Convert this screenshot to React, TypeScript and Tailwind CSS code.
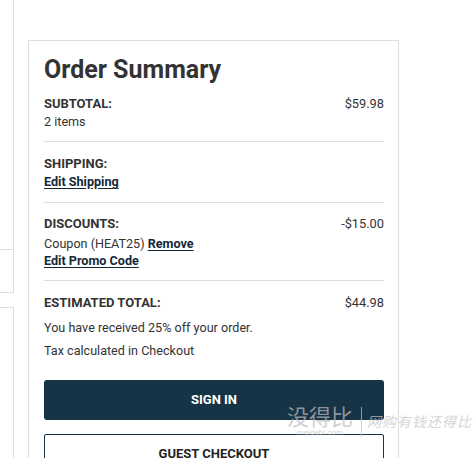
import React from 'react';

function Row({ label, value }: { label: string; value?: string }) {
    return (
        <div className="flex justify-between leading-[18px]">
            <span className="text-[13px] font-bold uppercase text-[#333]">{label}</span>
            {value && <span className="text-[12.8px] text-[#333]">{value}</span>}
        </div>
    );
}

export default function App() {
    return (
        <div
            className="relative h-[458px] w-[474px] overflow-hidden bg-white text-[12.6px] text-[#333]"
            style={{ fontFamily: 'Roboto, "Liberation Sans", sans-serif' }}
        >
            <div className="flex items-start gap-[14px]">
                {/* left column, mostly cut off */}
                <div className="w-[14px] shrink-0">
                    <div className="h-[293px] border-b border-r border-[#ddd]">
                        <div className="h-[250px] border-b border-[#ddd]"></div>
                    </div>
                    <div className="mt-[14px] h-[200px] border-r border-t border-[#ddd]"></div>
                </div>

                {/* order summary card */}
                <div className="mt-[40px] h-[460px] w-[371px] shrink-0 border border-[#ddd] pl-[15px] pr-[14px] pt-[13px]">
                    <h2 className="text-[25px] font-bold leading-[32px] text-[#333]">Order Summary</h2>

                    <div className="mt-[9px] border-b border-[#ddd] pb-[10px]">
                        <Row label="Subtotal:" value="$59.98" />
                        <div className="leading-[18px]">2 items</div>
                    </div>

                    <div className="border-b border-[#ddd] pb-[11px] pt-[13px]">
                        <Row label="Shipping:" />
                        <a href="#" className="block font-bold leading-[18px] text-[#13293a] underline underline-offset-2">
                            Edit Shipping
                        </a>
                    </div>

                    <div className="border-b border-[#ddd] pb-[10px] pt-[12px]">
                        <Row label="Discounts:" value="-$15.00" />
                        <div className="mt-[2px] leading-[17px]">
                            Coupon (HEAT25){' '}
                            <a href="#" className="font-bold text-[#13293a] underline underline-offset-2">Remove</a>
                        </div>
                        <a href="#" className="block font-bold leading-[18px] text-[#13293a] underline underline-offset-2">
                            Edit Promo Code
                        </a>
                    </div>

                    <div className="pt-[13px]">
                        <Row label="Estimated Total:" value="$44.98" />
                        <p className="mt-[4px] leading-[23px]">You have received 25% off your order.</p>
                        <p className="leading-[23px]">Tax calculated in Checkout</p>
                    </div>

                    <button className="mt-[18px] flex h-[40px] w-full items-center justify-center rounded-[3px] bg-[#173346] text-[13px] font-bold text-white">
                        SIGN IN
                    </button>
                    <button className="mt-[14px] flex h-[40px] w-full items-center justify-center rounded-[2px] border-[1.5px] border-[#173346] bg-white text-[13px] font-bold text-[#222]">
                        GUEST CHECKOUT
                    </button>
                </div>
            </div>

            {/* watermark */}
            <div className="pointer-events-none absolute left-[287px] top-[402px] flex items-start opacity-70">
                <div className="flex flex-col items-center">
                    <span
                        className="text-[22px] leading-[26px] text-[#bdbdbd]"
                        style={{ fontFamily: '"Noto Sans CJK SC", sans-serif' }}
                    >
                        没得比
                    </span>
                    <span className="text-[8px] leading-[9px] text-[#c4c4c4]">meidebi.com</span>
                </div>
                <div className="ml-[8px] mt-[5px] h-[30px] w-px bg-[#c4c4c4]"></div>
                <span
                    className="ml-[5px] mt-[10px] text-[14px] italic leading-[18px] tracking-[1px] text-[#c4c4c4]"
                    style={{ fontFamily: '"Noto Sans CJK SC", serif' }}
                >
                    网购有钱还得比
                </span>
            </div>
        </div>
    );
}
